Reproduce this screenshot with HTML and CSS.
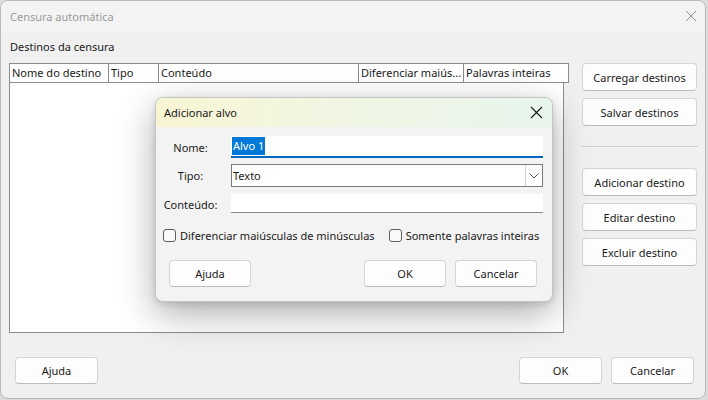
FILE: index.html
```html
<!DOCTYPE html>
<html lang="pt">
<head>
<meta charset="utf-8">
<title>Censura automática</title>
<link rel="stylesheet" href="styles.css">
</head>
<body>
<div class="window">
  <div class="titlebar">
    <span class="title">Censura automática</span>
    <svg class="close-main" width="12" height="12" viewBox="0 0 12 12"><path d="M1 1L11 11M11 1L1 11" stroke="#8a8a8a" stroke-width="1"/></svg>
  </div>
  <div class="content">
    <div class="main">
      <div class="left">
        <div class="label">Destinos da censura</div>
        <div class="list">
          <div class="thead">
            <div class="th c1">Nome do destino</div>
            <div class="th c2">Tipo</div>
            <div class="th c3">Conteúdo</div>
            <div class="th c4">Diferenciar maiús...</div>
            <div class="th c5">Palavras inteiras</div>
          </div>
          <div class="tbody"></div>
        </div>
      </div>
      <div class="side">
        <button class="btn side-btn">Carregar destinos</button>
        <button class="btn side-btn">Salvar destinos</button>
        <div class="sep"></div>
        <button class="btn side-btn">Adicionar destino</button>
        <button class="btn side-btn">Editar destino</button>
        <button class="btn side-btn">Excluir destino</button>
      </div>
    </div>
    <div class="footer">
      <button class="btn foot-btn">Ajuda</button>
      <div class="foot-right">
        <button class="btn foot-btn">OK</button>
        <button class="btn foot-btn">Cancelar</button>
      </div>
    </div>
  </div>

  <div class="dialog">
    <div class="dtitle">
      <span>Adicionar alvo</span>
      <svg class="close-dlg" width="13" height="13" viewBox="0 0 13 13"><path d="M1 1L12 12M12 1L1 12" stroke="#1a1a1a" stroke-width="1.1"/></svg>
    </div>
    <div class="dbody">
      <div class="form">
        <div class="flabel r1">Nome:</div>
        <div class="field name-field r1"><span class="sel">Alvo 1</span></div>
        <div class="flabel r2">Tipo:</div>
        <div class="field combo r2"><span class="combo-text">Texto</span><span class="drop"><svg width="10" height="6" viewBox="0 0 10 6"><path d="M0.5 0.5L5 5L9.5 0.5" fill="none" stroke="#555" stroke-width="1"/></svg></span></div>
        <div class="flabel r3">Conteúdo:</div>
        <div class="field content-field r3"></div>
      </div>
      <div class="checks">
        <label class="check"><span class="box"></span>Diferenciar maiúsculas de minúsculas</label>
        <label class="check"><span class="box"></span>Somente palavras inteiras</label>
      </div>
      <div class="dbuttons">
        <button class="btn dlg-btn">Ajuda</button>
        <div class="dright">
          <button class="btn dlg-btn">OK</button>
          <button class="btn dlg-btn">Cancelar</button>
        </div>
      </div>
    </div>
  </div>
</div>
</body>
</html>
```

FILE: styles.css
```css
* { box-sizing: border-box; }
html, body { margin: 0; padding: 0; }
body {
  width: 708px;
  height: 400px;
  background: #dcdcdc;
  font-family: "Noto Sans", sans-serif;
  font-size: 11px;
  color: #1a1a1a;
  overflow: hidden;
}
.window {
  position: relative;
  width: 706px;
  height: 399px;
  background: #f0f0f0;
  border: 1px solid #b9b9b9;
  border-radius: 8px;
  overflow: hidden;
}
.titlebar {
  height: 30px;
  background: #f3f3f3;
  display: flex;
  align-items: center;
  justify-content: space-between;
  padding: 0 8px 0 9px;
}
.title { color: #9a9a9a; font-size: 11px; }
.content { padding: 8px 0 0 8px; }
.main { display: flex; gap: 13px; }
.left { width: 560px; }
.label { line-height: 16px; height: 16px; margin-bottom: 8px; padding-left: 1px; }
.list { width: 560px; }
.thead {
  display: flex;
  height: 20px;
  background: #fff;
  border: 1px solid #8c8c8c;
}
.th {
  line-height: 18px;
  padding-left: 2px;
  border-right: 1px solid #8c8c8c;
  white-space: nowrap;
  overflow: hidden;
}
.c1 { width: 99px; }
.c2 { width: 50px; }
.c3 { width: 200px; }
.c4 { width: 105px; }
.c5 { width: 104px; border-right: none; }
.tbody {
  width: 555px;
  height: 250px;
  background: #fff;
  border: 1px solid #8c8c8c;
  border-top: none;
}
.side {
  width: 115px;
  padding-top: 24px;
  display: flex;
  flex-direction: column;
  gap: 7px;
}
.btn {
  font-family: "Noto Sans", sans-serif;
  font-size: 11px;
  color: #1a1a1a;
  background: #fdfdfd;
  border: 1px solid #d5d5d5;
  border-bottom-color: #bcbcbc;
  border-radius: 4px;
  padding: 0;
  margin: 0;
}
.side-btn { height: 28px; width: 115px; }
.sep {
  height: 1px;
  background: #cfcfcf;
  margin: 13px -1px 14px -1px;
}
.footer {
  display: flex;
  justify-content: space-between;
  margin-top: 24px;
  padding: 0 11px 0 6px;
}
.foot-right { display: flex; gap: 9px; }
.foot-btn { height: 27px; width: 83px; }

.dialog {
  position: absolute;
  left: 154px;
  top: 96px;
  width: 398px;
  height: 205px;
  background: #f3f3f3;
  border: 1px solid #c4c4c4;
  border-radius: 8px;
  box-shadow: 0 12px 36px rgba(0,0,0,0.32), 0 2px 6px rgba(0,0,0,0.12);
  overflow: hidden;
}
.dtitle {
  height: 29px;
  display: flex;
  align-items: center;
  justify-content: space-between;
  padding: 0 9px 0 8px;
  background: linear-gradient(90deg, #f8f5d3 0%, #f1f6e3 45%, #e7f5ec 100%);
  font-size: 11px;
}
.dbody { padding: 9px 9px 0 7px; }
.form {
  display: grid;
  grid-template-columns: 55px 1fr;
  column-gap: 13px;
  grid-template-rows: 22px 23px 20px;
  row-gap: 6px;
}
.flabel { display: flex; align-items: center; justify-content: center; }
.r3.flabel { padding-top: 2px; }
.field {
  background: #fff;
  border-bottom: 1px solid #8a8a8a;
  display: flex;
  align-items: center;
}
.r3 { margin-top: 1px; }
.name-field { border-bottom: 2px solid #0067c0; padding-left: 1px; }
.sel { background: #0078d7; color: #fff; line-height: 18px; padding: 0 1px; }
.combo { border: 1px solid #7a7a7a; justify-content: space-between; }
.combo-text { padding-left: 1px; }
.drop {
  width: 17px;
  height: 100%;
  border-left: 1px solid #cfcfcf;
  display: flex;
  align-items: center;
  justify-content: center;
}
.checks {
  display: flex;
  gap: 14px;
  margin-top: 15px;
  height: 14px;
  align-items: center;
}
.check { display: flex; align-items: center; gap: 4px; white-space: nowrap; }
.box {
  width: 13px;
  height: 13px;
  border: 1px solid #5c5c5c;
  border-radius: 3px;
  background: #fafafa;
}
.dbuttons {
  display: flex;
  justify-content: space-between;
  margin-top: 18px;
  padding: 0 6px;
}
.dright { display: flex; gap: 9px; }
.dlg-btn { width: 82px; height: 27px; }
```
